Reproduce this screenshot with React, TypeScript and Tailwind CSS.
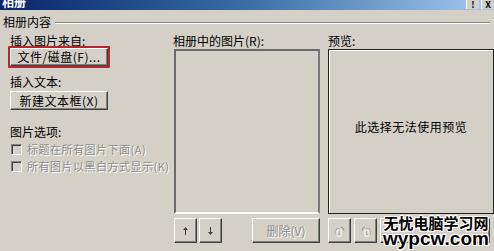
import React from "react";

const font = "font-['SimSun','Noto_Sans_CJK_SC',sans-serif]";

const Raised: React.FC<{ className?: string; children?: React.ReactNode }> = ({
  className = "",
  children,
}) => (
  <div
    className={`flex items-center justify-center border border-t-white border-l-white border-r-[#404040] border-b-[#404040] shadow-[inset_-1px_-1px_0_#808080] bg-[#d4d0c8] ${className}`}
  >
    {children}
  </div>
);

const Check: React.FC<{ label: string }> = ({ label }) => (
  <div className="flex items-center h-[16px]">
    <div className="w-[11px] h-[11px] border border-t-[#808080] border-l-[#808080] border-r-white border-b-white shadow-[inset_1px_1px_0_#404040] bg-[#d4d0c8]" />
    <span className="ml-[5px] text-[11px] text-[#8c8c8c] [text-shadow:1px_1px_0_#ffffff] tracking-[0.5px]">
      {label}
    </span>
  </div>
);

const Arrow: React.FC<{ down?: boolean }> = ({ down }) => (
  <svg width="7" height="10" viewBox="0 0 7 10" className={down ? "rotate-180" : ""}>
    <path d="M3.5 1 L1 4 H3 V9 H4 V4 H6 Z" fill="#404040" />
  </svg>
);

const Rotate: React.FC<{ flip?: boolean }> = ({ flip }) => (
  <svg width="12" height="12" viewBox="0 0 12 12" className={flip ? "-scale-x-100" : ""}>
    <path d="M2 10 V4 H6 V10 Z" fill="none" stroke="#9a9a9a" />
    <path d="M3 11 V5 H7 V11 Z" fill="none" stroke="#ffffff" />
    <path d="M7 2 Q10 2 10 6" fill="none" stroke="#9a9a9a" />
  </svg>
);

export default function App() {
  return (
    <div className={`w-[494px] h-[251px] bg-[#d4d0c8] overflow-hidden relative text-[12px] leading-[14px] text-black ${font}`}>
      {/* title bar */}
      <div className="h-[10px] flex items-start justify-between bg-gradient-to-r from-[#0a246a] via-[#3a6ea5] to-[#a6caf0] overflow-hidden">
        <span className="-mt-[5px] ml-[2px] text-white font-bold text-[12px] leading-[14px]">相册</span>
        <div className="flex gap-[2px] pr-0">
          <div className="w-[13px] h-[9px] bg-[#d4d0c8] border-l border-white flex items-end justify-center text-[9px] leading-[9px] font-bold">!</div>
          <div className="w-[13px] h-[9px] bg-[#d4d0c8] border-l border-white flex items-end justify-center text-[9px] leading-[9px] font-bold">X</div>
        </div>
      </div>

      {/* group legend */}
      <div className="flex items-center mt-[5px] pl-[3px] pr-[4px] h-[14px]">
        <span>相册内容</span>
        <div className="flex-1 ml-[4px] mt-[2px] h-[2px] border-t border-t-[#808080] border-b border-b-white" />
      </div>

      <div className="flex mt-[4px]">
        {/* left column */}
        <div className="ml-[10px] w-[163px] flex flex-col items-start">
          <div className="h-[14px] pt-[1px]">插入图片来自:</div>
          <div className="-ml-[2px] mt-[-1px] border-2 border-[#b8262a] rounded-[1px]">
            <Raised className="w-[98px] h-[18px] tracking-[0.5px]">文件/磁盘(F)...</Raised>
          </div>
          <div className="h-[14px] mt-[6px] pt-[1px]">插入文本:</div>
          <Raised className="mt-[3px] w-[98px] h-[19px] tracking-[0.5px]">新建文本框(X)</Raised>
          <div className="h-[14px] mt-[15px]">图片选项:</div>
          <div className="mt-[2px] ml-[1px] flex flex-col gap-[1px]">
            <Check label="标题在所有图片下面(A)" />
            <Check label="所有图片以黑白方式显示(K)" />
          </div>
        </div>

        {/* middle column */}
        <div className="w-[147px] flex flex-col">
          <div className="h-[14px] pt-[1px]">相册中的图片(R):</div>
          <div className="ml-[1px] mt-[2px] h-[165px] w-[146px] border-2 border-t-[#6a6a6a] border-l-[#6a6a6a] border-r-[#7a7a7a] border-b-white bg-[#d4d0c8]" />
          <div className="flex mt-[4px] ml-[1px]">
            <Raised className="w-[23px] h-[25px]"><Arrow /></Raised>
            <Raised className="ml-[2px] w-[23px] h-[25px]"><Arrow down /></Raised>
            <Raised className="ml-[30px] w-[68px] h-[25px] text-[#8c8c8c] [text-shadow:1px_1px_0_#ffffff]">删除(V)</Raised>
          </div>
        </div>

        {/* right column */}
        <div className="ml-[8px] w-[166px] flex flex-col">
          <div className="h-[14px] pt-[1px]">预览:</div>
          <div className="mt-[2px] h-[165px] w-[166px] border border-[#202020] shadow-[inset_1px_1px_0_#ffffff] flex items-center justify-center">
            <span className="-mt-[10px] tracking-[0.5px]">此选择无法使用预览</span>
          </div>
          <div className="flex mt-[4px]">
            <Raised className="w-[23px] h-[25px]"><Rotate /></Raised>
            <Raised className="ml-[3px] w-[23px] h-[25px]"><Rotate flip /></Raised>
            <Raised className="ml-[3px] w-[110px] h-[25px]" />
          </div>
        </div>
      </div>

      {/* watermark */}
      <div className="absolute left-[383px] top-[214px] flex flex-col items-center leading-none font-bold text-black [text-shadow:1px_0_0_#fff,-1px_0_0_#fff,0_1px_0_#fff,0_-1px_0_#fff,1px_1px_0_#fff,-1px_-1px_0_#fff,1px_-1px_0_#fff,-1px_1px_0_#fff]">
        <span className="text-[15px] leading-[17px] font-['Noto_Sans_CJK_SC',sans-serif]">无忧电脑学习网</span>
        <span className="text-[19px] leading-[16px] font-['Liberation_Sans',Arial,sans-serif]">wypcw.com</span>
      </div>
    </div>
  );
}
